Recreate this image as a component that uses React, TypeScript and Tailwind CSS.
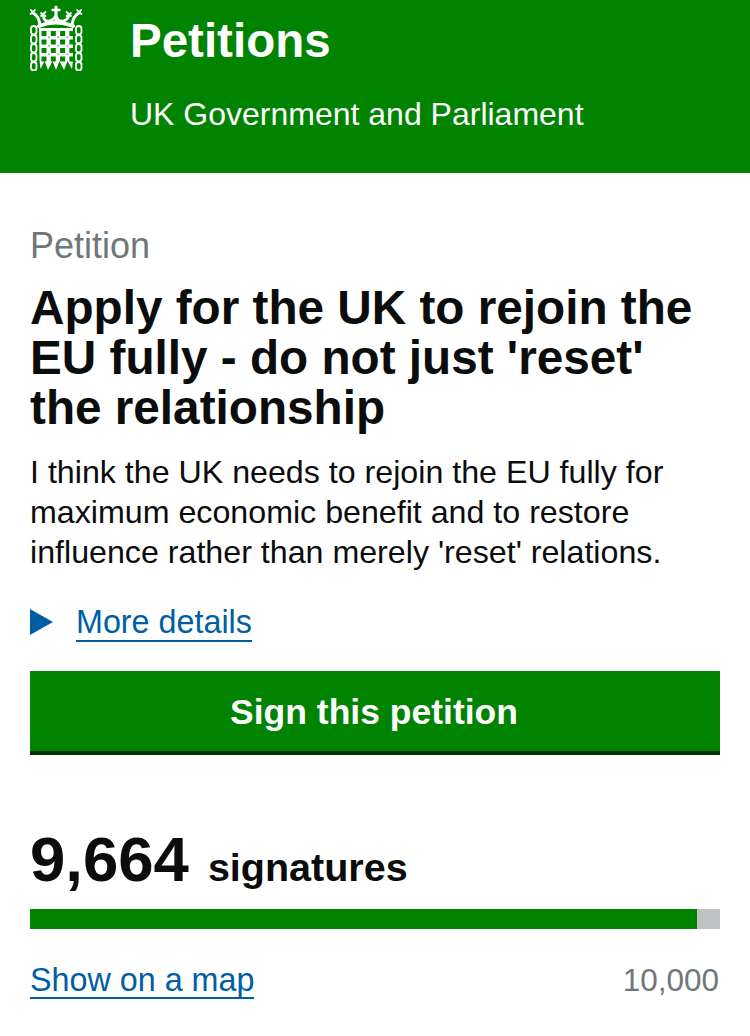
import React from "react";

const GREEN = "#008300";

const PortcullisLogo = () => (
  <svg width="54" height="66" viewBox="0 0 54 66" className="shrink-0" fill="none">
    {/* crown */}
    <g stroke="#fff" strokeLinecap="round">
      <path d="M4 8Q10 11 11 20" strokeWidth="3" />
      <path d="M50 8Q44 11 43 20" strokeWidth="3" />
      <path d="M14 10Q15 17 20 16T27 10Q29 17 34 16T40 10" strokeWidth="2.6" />
      <path d="M27 2V16" strokeWidth="3" />
      <path d="M23.5 5H30.5" strokeWidth="2.4" />
      <path d="M1.5 9L6 5M2 5L6 10M12 8L16.5 11M16.5 7L12 11M52.5 9L48 5M52 5L48 10M42 8L37.5 11M37.5 7L42 11" strokeWidth="1.8" />
      <path d="M10 21Q27 14 44 21" strokeWidth="4" />
    </g>
    {/* chains */}
    {[0, 1, 2, 3, 4].map((i) => (
      <React.Fragment key={i}>
        <rect x="2" y={21 + i * 9} width="5.5" height="8.5" rx="2.7" stroke="#fff" strokeWidth="1.8" />
        <rect x="47" y={21 + i * 9} width="5.5" height="8.5" rx="2.7" stroke="#fff" strokeWidth="1.8" />
      </React.Fragment>
    ))}
    {/* gate */}
    <path d="M10 23h34v32l-1 9-4.500-8-3.500 9-4.500-9-3.500 9-3.500-9-4.500 9-3.500-9-4 8-1-9z" fill="#fff" />
    {[0, 1, 2, 3].map((r) =>
      [0, 1, 2, 3].map((c) => (
        <rect key={`${r}-${c}`} x={12.5 + c * 9.3} y={26 + r * 8.5} width="5" height="5" fill={GREEN} />
      ))
    )}
    {[0, 1, 2].map((r) =>
      [0, 1, 2].map((c) => (
        <rect key={`d${r}-${c}`} x={19.2 + c * 9.3} y={31.4 + r * 8.5} width="1.6" height="1.6" fill={GREEN} opacity="0.6" />
      ))
    )}
  </svg>
);

const App = () => {
  return (
    <div className="w-[750px] h-[1036px] overflow-hidden bg-white font-['Liberation_Sans',Arial,sans-serif] text-[#0b0c0c]">
      {/* Header */}
      <header className="h-[173px] bg-[#008300] flex items-start pl-[29px] pt-[5px] text-white">
        <PortcullisLogo />
        <div className="ml-[47px]">
          <div className="text-[47.5px] leading-[72px] font-bold">Petitions</div>
          <div className="text-[32px] leading-[38px] mt-[18px]">UK Government and Parliament</div>
        </div>
      </header>

      <main className="px-[30px]">
        <div className="pt-[54px] text-[36px] leading-[38px] text-[#6f777b]">Petition</div>
        <h1 className="mt-[18px] text-[47.7px] leading-[50px] font-bold">
          Apply for the UK to rejoin the
          <br />
          EU fully - do not just 'reset'
          <br />
          the relationship
        </h1>
        <p className="mt-[19px] text-[32.2px] leading-[40px]">
          I think the UK needs to rejoin the EU fully for
          <br />
          maximum economic benefit and to restore
          <br />
          influence rather than merely 'reset' relations.
        </p>

        <div className="mt-[31px] flex items-center h-[40px]">
          <span className="w-0 h-0 mb-[2px] border-y-[13px] border-y-transparent border-l-[23px] border-l-[#005ea5]" />
          <a href="#" className="ml-[23px] text-[32.3px] leading-[35px] text-[#005ea5] border-b-2 border-[#005ea5]">
            More details
          </a>
        </div>

        <button className="mt-[28px] w-full h-[84px] pt-[4px] pr-[2px] bg-[#008300] border-b-[4px] border-[#003300] text-white text-[35.5px] font-bold">
          Sign this petition
        </button>

        <div className="mt-[68px] flex items-baseline">
          <span className="text-[63.5px] leading-[72px] font-bold">9,664</span>
          <span className="ml-[19px] text-[39.5px] font-bold">signatures</span>
        </div>

        <div className="mt-[12px] h-[20px] bg-[#bfc1c3]">
          <div className="h-full bg-[#008300] w-[667px]" />
        </div>

        <div className="mt-[34px] flex items-start justify-between">
          <a href="#" className="text-[32.3px] leading-[34px] text-[#005ea5] border-b-2 border-[#005ea5]">
            Show on a map
          </a>
          <span className="pr-[1px] text-[31.5px] leading-[34px] text-[#6f777b]">10,000</span>
        </div>
      </main>
    </div>
  );
};

export default App;
